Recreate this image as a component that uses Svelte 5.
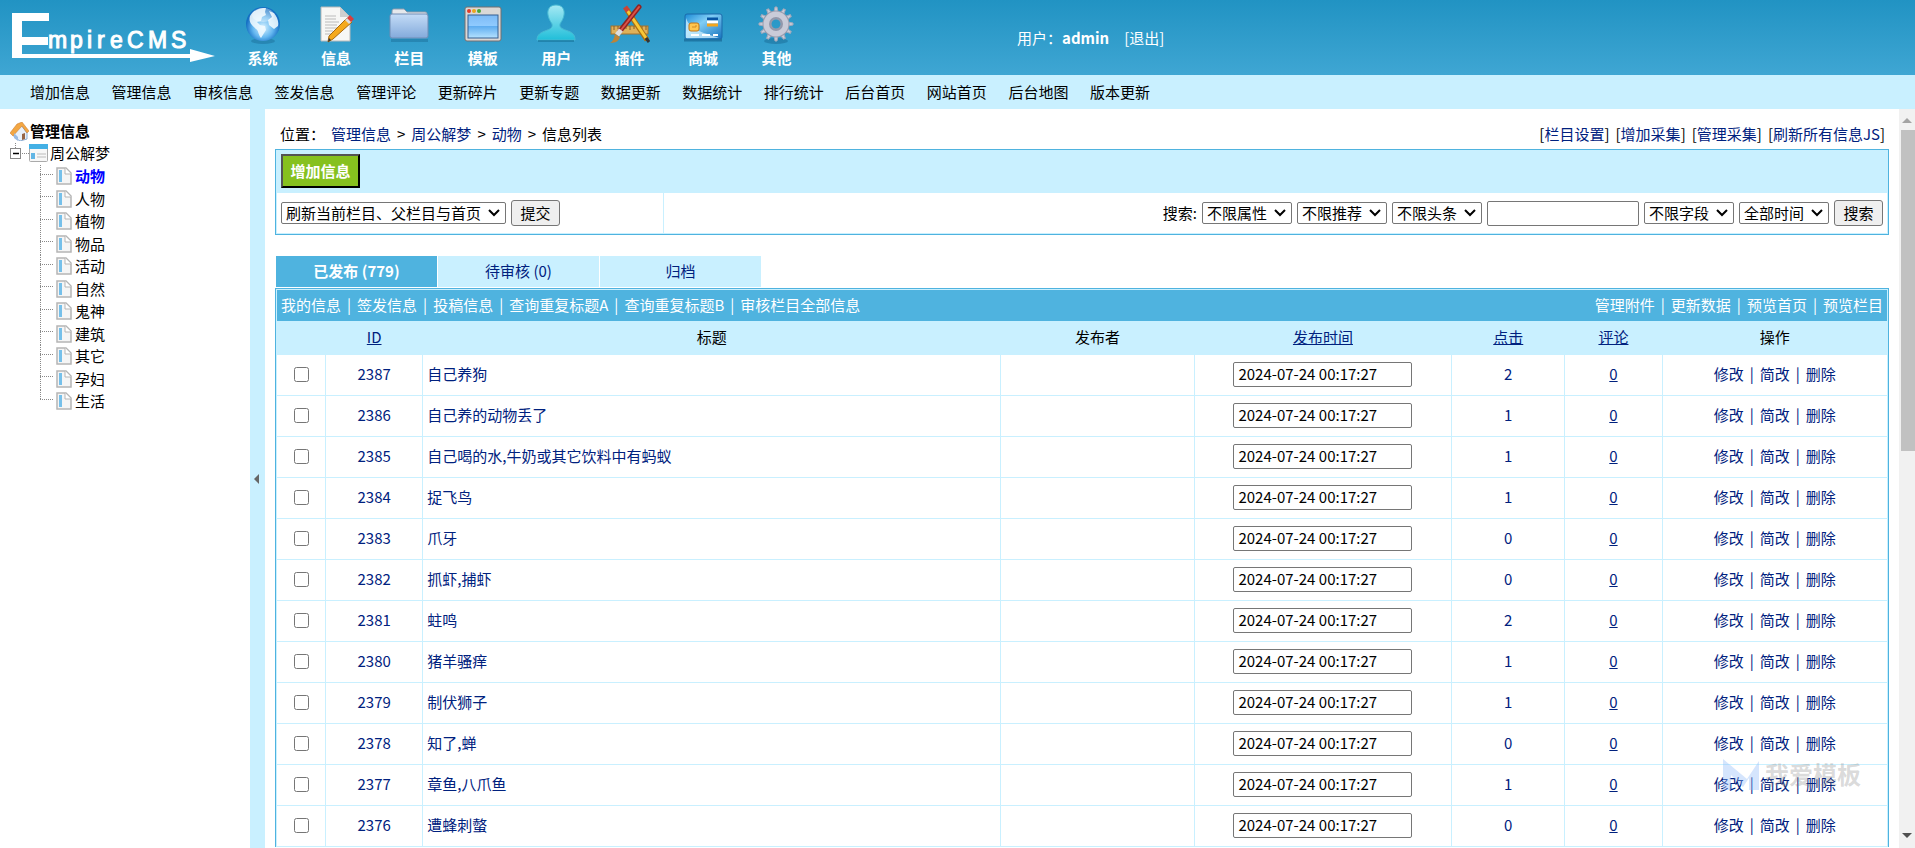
<script>
	const menus = [
		{ key: 'system', label: '系统' },
		{ key: 'info', label: '信息' },
		{ key: 'column', label: '栏目' },
		{ key: 'template', label: '模板' },
		{ key: 'user', label: '用户' },
		{ key: 'plugin', label: '插件' },
		{ key: 'shop', label: '商城' },
		{ key: 'other', label: '其他' }
	];

	const shortcuts = [
		'增加信息', '管理信息', '审核信息', '签发信息', '管理评论', '更新碎片', '更新专题',
		'数据更新', '数据统计', '排行统计', '后台首页', '网站首页', '后台地图', '版本更新'
	];

	const tree = ['动物', '人物', '植物', '物品', '活动', '自然', '鬼神', '建筑', '其它', '孕妇', '生活'];

	const leftLinks = ['我的信息', '签发信息', '投稿信息', '查询重复标题A', '查询重复标题B', '审核栏目全部信息'];
	const rightLinks = ['管理附件', '更新数据', '预览首页', '预览栏目'];
	const topLinks = ['栏目设置', '增加采集', '管理采集', '刷新所有信息JS'];
	const filters = ['不限属性', '不限推荐', '不限头条'];
	const filtersAfter = ['不限字段', '全部时间'];
	const actions = ['修改', '简改', '删除'];

	let rows = $state([
		{ id: 2387, title: '自己养狗', clicks: 2 },
		{ id: 2386, title: '自己养的动物丢了', clicks: 1 },
		{ id: 2385, title: '自己喝的水,牛奶或其它饮料中有蚂蚁', clicks: 1 },
		{ id: 2384, title: '捉飞鸟', clicks: 1 },
		{ id: 2383, title: '爪牙', clicks: 0 },
		{ id: 2382, title: '抓虾,捕虾', clicks: 0 },
		{ id: 2381, title: '蛀鸣', clicks: 2 },
		{ id: 2380, title: '猪羊骚痒', clicks: 1 },
		{ id: 2379, title: '制伏狮子', clicks: 1 },
		{ id: 2378, title: '知了,蝉', clicks: 0 },
		{ id: 2377, title: '章鱼,八爪鱼', clicks: 1 },
		{ id: 2376, title: '遭蜂刺螫', clicks: 0 }
	].map((row) => ({ ...row, time: '2024-07-24 00:17:27', checked: false })));

	const teeth = [0, 30, 60, 90, 120, 150, 180, 210, 240, 270, 300, 330];
</script>

{#snippet menuIcon(key)}
	<svg class="menu-icon" viewBox="0 0 40 40" aria-hidden="true">
		{#if key === 'system'}
			<ellipse cx="20" cy="37" rx="12" ry="3" fill="#16648f" opacity=".4" />
			<circle cx="20" cy="20" r="17" fill="url(#globe)" />
			<path d="M7 12c4-7 11-8 16-8l-1 4 1 3-4 2-1 4-4 1 3 3 5 1 1 4-5 8c-3-3-2-7-5-9-3-3-8-6-6-13zM26 7l5 2c3 4 5 8 4 13l-4 3-5-4-1-5 4-3z" fill="#f4fbff" opacity=".85" />
			<ellipse cx="20" cy="11" rx="11" ry="7" fill="#fff" opacity=".35" />
		{:else if key === 'info'}
			<path d="M5 3h19l10 10v24H5z" fill="#f7f7f5" stroke="#b9b9b9" />
			<path d="M24 3v10h10z" fill="#cfcfcf" />
			<path d="M9 12h11M9 15h11M9 18h14M9 21h12M9 24h13M9 27h8M9 30h6" stroke="#bbb" />
			<path d="M31 14l5 4-19 17-5 3 1-6z" fill="#f5a91b" stroke="#a66a12" />
			<path d="M29 16l3-3 4 4-3 3z" fill="#ddd" />
			<path d="M31 14l3-3 4 4-3 3z" fill="#d93d3d" />
			<path d="M12 38l1-4 2 2z" fill="#333" />
		{:else if key === 'column'}
			<path d="M2 35h37v3H2z" fill="#16648f" opacity=".4" />
			<path d="M3 8c0-3 1-3 3-3h9l3 3h18c2 0 2 1 2 3v6H3z" fill="#e5e8ec" stroke="#8b9aad" />
			<rect x="1" y="10" width="38" height="24" rx="2" fill="url(#folder)" stroke="#718db5" />
		{:else if key === 'template'}
			<rect x="2" y="3" width="36" height="34" rx="2" fill="#dad8d6" stroke="#746f70" />
			<circle cx="6" cy="7" r="2" fill="#e33a28" /><circle cx="11" cy="7" r="2" fill="#eba61b" /><circle cx="16" cy="7" r="2" fill="#48a638" />
			<rect x="5" y="11" width="30" height="23" fill="url(#screen)" stroke="#355f91" />
		{:else if key === 'user'}
			<path d="M20 1c6 0 9 4 8 10-1 5-3 7-4 9-1 4 3 5 8 7 6 2 7 5 7 9H1c0-4 2-7 8-9 5-2 8-3 7-7-1-2-3-4-4-9-1-6 2-10 8-10z" fill="url(#person)" stroke="#47b9d3" />
			<path d="M2 37h36" stroke="#16739a" stroke-width="2" opacity=".6" />
		{:else if key === 'plugin'}
			<rect x="1" y="22" width="37" height="8" fill="#dfb15a" stroke="#a4732d" />
			<path d="M4 22v4M8 22v3M12 22v4M16 22v3M20 22v4M24 22v3M28 22v4M32 22v3M36 22v4" stroke="#865d24" />
			<path d="M17 6l20 30" stroke="#a97013" stroke-width="5" />
			<path d="M17 6l19 28" stroke="#f8c838" stroke-width="3" />
			<path d="M15 3l3 4" stroke="#cb4435" stroke-width="5" /><path d="M36 34l3 4" stroke="#333" stroke-width="3" />
			<path d="M29 3L10 27" stroke="#8f2323" stroke-width="5" stroke-linecap="round" />
			<path d="M29 3L11 26" stroke="#dc5247" stroke-width="2" stroke-linecap="round" />
			<path d="M11 26l-4 5" stroke="#dedede" stroke-width="5" /><path d="M5 30c-1 5-2 7-5 9 7 0 9-3 10-6z" fill="#bc8438" />
		{:else if key === 'shop'}
			<path d="M1 36h38" stroke="#0d527f" stroke-width="3" opacity=".5" />
			<rect x="2" y="10" width="37" height="25" rx="2" fill="url(#card)" stroke="#1b6aab" />
			<path d="M3 34V14C7 27 23 29 36 34z" fill="#d9f3ff" opacity=".7" />
			<rect x="6" y="19" width="10" height="8" rx="2" fill="#ffc64f" stroke="#c17515" /><path d="M9 23h4v-2" fill="none" stroke="#d48b23" />
			<path d="M24 15h11" stroke="#0754a4" stroke-width="3" /><path d="M24 18h11" stroke="#fff" stroke-width="3" /><path d="M24 21h11" stroke="#f3a51c" stroke-width="3" />
			<path d="M8 31h8m3 0h8m3 0h5" stroke="#fff" stroke-width="2" />
		{:else}
			<ellipse cx="20" cy="37" rx="12" ry="3" fill="#16648f" opacity=".45" />
			{#each teeth as angle}
				<path d="M18 9l1-6h2l1 6z" fill="#c9cbd8" stroke="#a5a9ba" transform="rotate({angle} 20 20)" />
			{/each}
			<circle cx="20" cy="20" r="9" fill="none" stroke="#979cae" stroke-width="9" />
			<circle cx="20" cy="20" r="9" fill="none" stroke="#c9cbd8" stroke-width="7" />
			<circle cx="20" cy="20" r="6" fill="none" stroke="#9298ab" stroke-width="2" />
		{/if}
	</svg>
{/snippet}

{#snippet selectBox(label)}
	<select aria-label={label}><option>{label}</option></select>
{/snippet}

{#snippet linkList(items)}
	<span>{#each items as item, i}{#if i}<i class="sep">|</i>{/if}<a href="#{item}">{item}</a>{/each}</span>
{/snippet}

<svg class="defs" width="0" height="0" aria-hidden="true">
	<defs>
		<radialGradient id="globe" cx=".5" cy=".6"><stop offset="0" stop-color="#d9f2ff" /><stop offset=".6" stop-color="#64b7f0" /><stop offset="1" stop-color="#146fc3" /></radialGradient>
		<linearGradient id="folder" x2="0" y2="1"><stop stop-color="#c4dcf7" /><stop offset="1" stop-color="#83aadb" /></linearGradient>
		<linearGradient id="screen" x2="0" y2="1"><stop stop-color="#7dbaf5" /><stop offset=".5" stop-color="#91ccff" /><stop offset=".5" stop-color="#5fadf0" /><stop offset="1" stop-color="#b5e2ff" /></linearGradient>
		<linearGradient id="person" x2="0" y2="1"><stop stop-color="#a5e9f4" /><stop offset="1" stop-color="#20bed9" /></linearGradient>
		<linearGradient id="card" x2="1" y2="1"><stop stop-color="#198bd6" /><stop offset=".4" stop-color="#80cdf5" /><stop offset="1" stop-color="#1572bd" /></linearGradient>
	</defs>
</svg>

<div class="page">
	<header>
		<svg class="logo" viewBox="0 0 206 52" role="img" aria-label="EmpireCMS">
			<path d="M0 0h37v8H10v16h26v8H10v9h168v-5l25 7-25 6v-4H0z" fill="#fff" />
			<text x="36 58 75 85 98 115 136 159" y="35">mpireCMS</text>
		</svg>
		<nav class="menus">
			{#each menus as menu}
				<a href="#{menu.key}">{@render menuIcon(menu.key)}{menu.label}</a>
			{/each}
		</nav>
		<div class="account">用户：<b>admin</b><a href="#logout">[退出]</a></div>
	</header>

	<div class="shortcut-bar">
		<nav class="shortcuts">
			{#each shortcuts as item}<a href="#{item}">{item}</a>{/each}
		</nav>
	</div>

	<div class="body">
		<aside>
			<div class="tree-title">
				<svg width="19" height="19" viewBox="0 0 19 19" aria-hidden="true">
					<path d="M4 9l7-6 6 8v6l-7 2-6-4z" fill="#e9f1fa" stroke="#8baad0" />
					<path d="M0 11L7 2l5-2 7 9-2 2-5-7-9 10z" fill="#f3a743" stroke="#c7772c" stroke-width=".5" />
					<path d="M12 12l3-1v6l-3 1z" fill="#966546" /><path d="M4 11l4 4v4l-4-3z" fill="#9bbbe2" />
				</svg>
				<b>管理信息</b>
			</div>
			<div class="tree-root">
				<svg width="39" height="20" viewBox="0 0 39 20" aria-hidden="true">
					<path d="M5.5 0v5M12 10.500h8" stroke="#888" stroke-dasharray="1 1" />
					<rect x=".5" y="5.500" width="10" height="10" fill="#fff" stroke="#888" /><path d="M3 10.500h6" stroke="#000" stroke-width="1.500" />
					<rect x="19.500" y="1.500" width="18" height="17" rx="1" fill="#f7f7f7" stroke="#aaa" />
					<path d="M19 1h19v5H19z" fill="#43b0e5" /><path d="M21 10h4v6h-4z" fill="#62b6e5" /><path d="M27 11h9M27 14h9" stroke="#bbb" />
				</svg>
				<a href="#root">周公解梦</a>
			</div>
			<ul>
				{#each tree as item, i}
					<li class:current={i === 0} class:last={i === tree.length - 1}>
						<svg width="16" height="18" viewBox="0 0 16 18" aria-hidden="true">
							<path d="M1 1h9l5 5v11H1z" fill="#f5f5f5" stroke="#b5b5b5" stroke-width="1.500" /><path d="M9 1v6h6" fill="#fff" stroke="#b5b5b5" />
							<path d="M3 3h3v12H3z" fill="#76c0ea" />
						</svg>
						<a href="#node{i}">{item}</a>
					</li>
				{/each}
			</ul>
		</aside>
		<button class="splitter" aria-label="折叠菜单"><svg width="5" height="10" viewBox="0 0 5 10"><path d="M5 0v10L0 5z" fill="#666" /></svg></button>

		<main>
			<div class="location">
				<div class="crumbs">
					<span>位置：</span><a href="#manage">管理信息</a><span>&gt;</span><a href="#root">周公解梦</a><span>&gt;</span><a href="#node0">动物</a><span>&gt;</span><span>信息列表</span>
				</div>
				<div class="top-links">{#each topLinks as item}<span>[<a href="#{item}">{item}</a>]</span>{/each}</div>
			</div>

			<section class="tools">
				<div class="tools-head"><button class="add">增加信息</button></div>
				<div class="tools-row">
					<form class="refresh">{@render selectBox('刷新当前栏目、父栏目与首页')}<button type="button">提交</button></form>
					<form class="search">
						<label for="keyword">搜索:</label>
						{#each filters as item}{@render selectBox(item)}{/each}
						<input id="keyword" type="text" />
						{#each filtersAfter as item}{@render selectBox(item)}{/each}
						<button type="button">搜索</button>
					</form>
				</div>
			</section>

			<nav class="tabs">
				<a class="active" href="#published">已发布 (779)</a>
				<a href="#pending">待审核 (0)</a>
				<a href="#archive">归档</a>
			</nav>

			<table>
				<colgroup>
					<col style="width:3%" /><col style="width:6%" /><col style="width:36%" /><col style="width:12%" />
					<col style="width:16%" /><col style="width:7%" /><col style="width:6%" /><col style="width:14%" />
				</colgroup>
				<thead>
					<tr class="bar">
						<td colspan="8">
							<div>{@render linkList(leftLinks)}{@render linkList(rightLinks)}</div>
						</td>
					</tr>
					<tr>
						<th></th>
						<th><a href="#id">ID</a></th>
						<th>标题</th>
						<th>发布者</th>
						<th><a href="#time">发布时间</a></th>
						<th><a href="#clicks">点击</a></th>
						<th><a href="#comments">评论</a></th>
						<th>操作</th>
					</tr>
				</thead>
				<tbody>
					{#each rows as row (row.id)}
						<tr>
							<td><input type="checkbox" aria-label="选择 {row.id}" bind:checked={row.checked} /></td>
							<td><a href="#i{row.id}">{row.id}</a></td>
							<td class="title"><a href="#i{row.id}">{row.title}</a></td>
							<td></td>
							<td><input type="text" class="time" aria-label="发布时间 {row.id}" bind:value={row.time} /></td>
							<td><a href="#c{row.id}">{row.clicks}</a></td>
							<td><a class="under" href="#p{row.id}">0</a></td>
							<td class="ops">{@render linkList(actions)}</td>
						</tr>
					{/each}
				</tbody>
			</table>
		</main>

		<div class="scrollbar" aria-hidden="true">
			<i class="up"></i>
			<div class="thumb"></div>
			<i class="down"></i>
		</div>
	</div>

	<div class="watermark" aria-hidden="true">
		<svg width="37" height="31" viewBox="0 0 37 31"><path d="M0 0l24 20L36 2v29H26V19l-6 9L8 16v15H0z" /></svg>
		我爱模板
	</div>
</div>

<style>
	:global(body) {
		margin: 0;
		overflow: hidden;
	}

	.page {
		position: relative;
		display: flex;
		flex-direction: column;
		height: 100vh;
		overflow: hidden;
		font: 15px/20px 'Noto Sans CJK SC', sans-serif;
		color: #000;
		background: #fff;
	}

	.defs {
		position: absolute;
	}

	a {
		color: #00217e;
		text-decoration: none;
	}

	header {
		display: flex;
		flex: none;
		height: 75px;
		background: linear-gradient(#2193c3, #3fa6d3);
		color: #fff;
	}

	header a {
		color: #fff;
	}

	.logo {
		width: 206px;
		height: 52px;
		margin: 13px 20px 0 12px;
	}

	.logo text {
		font: 23px 'Liberation Sans', sans-serif;
		fill: #fff;
		stroke: #fff;
	}

	.menus {
		display: flex;
		justify-content: space-between;
		width: 563px;
	}

	.menus a {
		display: flex;
		flex-direction: column;
		align-items: center;
		width: 49px;
		padding-top: 4px;
		font-weight: bold;
	}

	.menu-icon {
		width: 40px;
		height: 40px;
		margin-bottom: 4px;
	}

	.account {
		margin: 28px 0 0 216px;
	}

	.account a {
		margin-left: 15px;
	}

	.shortcut-bar {
		flex: none;
		padding-left: 30px;
		line-height: 34px;
		background: #c9f0ff;
	}

	.shortcuts {
		display: flex;
		justify-content: space-between;
		width: 1120px;
	}

	.shortcuts a {
		color: #000;
	}

	.body {
		display: flex;
		flex: 1;
		min-height: 0;
	}

	aside {
		flex: none;
		width: 240px;
		padding: 12px 0 0 10px;
	}

	aside a {
		color: #000;
	}

	.tree-title,
	.tree-root {
		display: flex;
		align-items: center;
		gap: 1px;
		height: 20px;
	}

	.tree-root {
		height: 24px;
	}

	ul {
		margin: 0 0 0 30px;
		padding: 0;
		list-style: none;
	}

	li {
		display: flex;
		align-items: center;
		gap: 3px;
		height: 22px;
		background:
			repeating-linear-gradient(#888 0 1px, transparent 1px 2px) 0 0 / 1px 100% no-repeat,
			repeating-linear-gradient(90deg, #888 0 1px, transparent 1px 2px) 0 9px / 14px 1px no-repeat;
	}

	li:nth-child(even) {
		height: 23px;
	}

	li.last {
		background-size: 1px 9px, 14px 1px;
	}

	li svg {
		margin-left: 16px;
	}

	.current a {
		font-weight: bold;
		color: #00f;
	}

	.splitter {
		display: flex;
		align-items: center;
		flex: none;
		width: 15px;
		padding: 0 0 0 4px;
		border: 0;
		border-radius: 0;
		background: #c9f0ff;
	}

	main {
		flex: 1;
		min-width: 0;
		padding: 15px 10px 0;
		overflow: hidden;
	}

	.location {
		display: flex;
		justify-content: space-between;
		padding: 0 4px 5px 5px;
	}

	.crumbs,
	.top-links {
		display: flex;
		gap: 6px;
	}

	.tools {
		border: 1px solid #4fb3df;
	}

	.tools-head {
		height: 39px;
		padding: 4px 5px 0;
		background: #c9f0ff;
	}

	button,
	select,
	input {
		font: inherit;
		color: #000;
		box-sizing: border-box;
		margin: 0;
	}

	.add {
		width: 79px;
		height: 34px;
		padding: 0;
		border: 2px outset #000;
		background: #86c11f;
		color: #fff;
		font-weight: bold;
	}

	.tools-row {
		display: flex;
		border: 1px solid #c9f0ff;
		border-top: 0;
	}

	form {
		display: flex;
		align-items: center;
		gap: 5px;
		height: 40px;
		padding: 0 4px;
	}

	.refresh {
		width: 378px;
		border-right: 1px solid #c9f0ff;
	}

	.search {
		flex: 1;
		justify-content: flex-end;
	}

	form button {
		width: 49px;
		height: 26px;
		padding: 0 0 1px;
		border: 1px solid #767676;
		border-radius: 3px;
		background: #efefef;
	}

	select {
		appearance: none;
		height: 22px;
		padding: 0 23px 0 4px;
		border: 1px solid #767676;
		border-radius: 2px;
		line-height: 20px;
		background: #fff url("data:image/svg+xml,%3Csvg xmlns='http://www.w3.org/2000/svg' width='12' height='8'%3E%3Cpath d='M1 1l5 5 5-5' fill='none' stroke='%23000' stroke-width='2'/%3E%3C/svg%3E") right 5px center no-repeat;
	}

	input[type='text'] {
		height: 25px;
		padding: 0 4px 2px;
		border: 1px solid #767676;
		border-radius: 2px;
		vertical-align: middle;
	}

	#keyword {
		width: 152px;
	}

	.tabs {
		display: flex;
		gap: 1px;
		padding: 21px 0 1px 1px;
	}

	.tabs a {
		width: 161px;
		padding-bottom: 2px;
		line-height: 29px;
		text-align: center;
		background: #c9f0ff;
	}

	.tabs .active {
		background: #4fb3df;
		color: #fff;
		font-weight: bold;
	}

	table {
		width: 100%;
		table-layout: fixed;
		border: 1px solid #4fb3df;
		border-bottom: 0;
		border-spacing: 1px;
		background: #c9f0ff;
	}

	td,
	th {
		height: 38px;
		padding: 0 0 2px;
		text-align: center;
		background: #fff;
		font-weight: normal;
	}

	.bar td {
		height: 29px;
		background: #4fb3df;
		color: #fff;
	}

	.bar div {
		display: flex;
		justify-content: space-between;
		padding: 0 4px;
	}

	.bar a {
		color: #fff;
	}

	.sep {
		margin: 0 6px;
		font-style: normal;
	}

	th {
		height: 30px;
		background: #c9f0ff;
	}

	th a,
	.under {
		text-decoration: underline;
	}

	td.title {
		padding-left: 4px;
		text-align: left;
	}

	.ops {
		color: #00217e;
	}

	input[type='checkbox'] {
		width: 15px;
		height: 15px;
		margin-bottom: 2px;
		vertical-align: middle;
	}

	.time {
		width: 179px;
	}

	.scrollbar {
		display: flex;
		flex-direction: column;
		align-items: center;
		flex: none;
		width: 16px;
		background: #f1f1f1;
	}

	.thumb {
		align-self: flex-end;
		width: 14px;
		height: 321px;
		background: #c1c1c1;
	}

	.up,
	.down {
		width: 0;
		border: 5px solid transparent;
	}

	.up {
		margin: 9px 0 7px;
		border-top: 0;
		border-bottom-color: #a3a3a3;
	}

	.down {
		margin: auto 0 10px;
		border-bottom: 0;
		border-top-color: #505050;
	}

	.watermark {
		position: absolute;
		right: 54px;
		bottom: 58px;
		display: flex;
		align-items: center;
		gap: 5px;
		font-size: 24px;
		line-height: 32px;
		font-weight: bold;
		color: rgba(130, 130, 130, 0.3);
		pointer-events: none;
	}

	.watermark path {
		fill: rgba(150, 190, 250, 0.4);
	}
</style>
